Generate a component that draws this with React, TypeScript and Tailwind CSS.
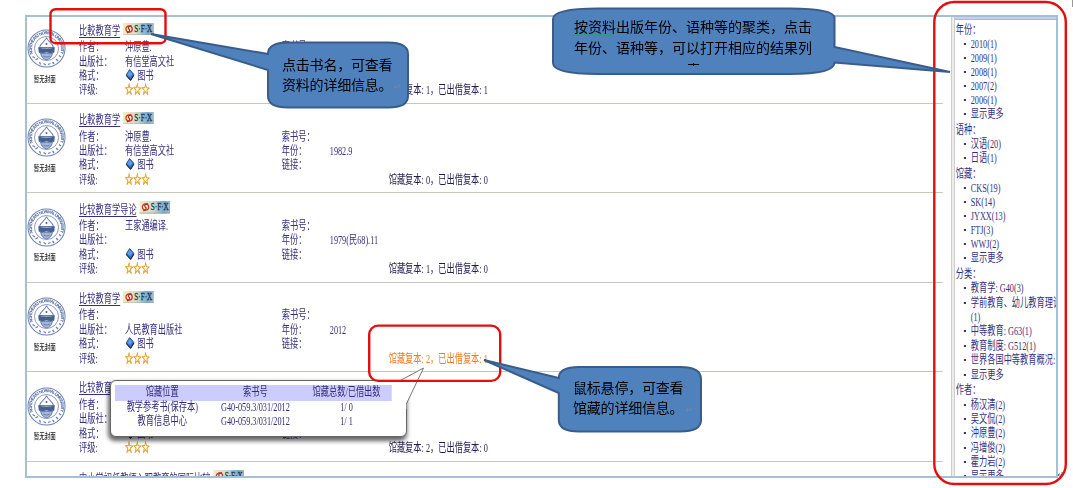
import React from "react";

type Book = {
  title: string;
  author?: string;
  publisher?: string;
  year?: string;
  copies: string;
  highlighted?: boolean;
};

const books: Book[] = [
  { title: "比較教育学", author: "沖原豊.", publisher: "有信堂高文社", copies: "馆藏复本: 1，已出借复本: 1" },
  { title: "比較教育学", author: "沖原豊.", publisher: "有信堂高文社", year: "1982.9", copies: "馆藏复本: 0，已出借复本: 0" },
  { title: "比较教育学导论", author: "王家通编译.", year: "1979(民68).11", copies: "馆藏复本: 1，已出借复本: 0" },
  { title: "比较教育学", publisher: "人民教育出版社", year: "2012", copies: "馆藏复本: 2，已出借复本: 1", highlighted: true },
  { title: "比较教育学", copies: "馆藏复本: 2，已出借复本: 0" },
];

const facets = [
  { name: "年份：", box: "h-[100.2px]", row: "h-[14px] leading-[14px]", items: ["2010(1)", "2009(1)", "2008(1)", "2007(2)", "2006(1)", "显示更多"] },
  { name: "语种：", box: "h-[44.1px]", row: "h-[14.4px] leading-[14px]", items: ["汉语(20)", "日语(1)"] },
  { name: "馆藏：", box: "h-[100.5px]", row: "h-[14px] leading-[14px]", items: ["CKS(19)", "SK(14)", "JYXX(13)", "FTJ(3)", "WWJ(2)", "显示更多"] },
  { name: "分类：", box: "h-[116.2px]", row: "h-[14.35px] leading-[14px]", items: ["教育学: G40(3)", "学前教育、幼儿教育理论", "(1)", "中等教育: G63(1)", "教育制度: G512(1)", "世界各国中等教育概况:", "显示更多"] },
  { name: "作者：", box: "h-[100px]", row: "h-[14.3px] leading-[14px]", items: ["杨汉清(2)", "吴文侃(2)", "沖原豊(2)", "冯增俊(2)", "霍力岩(2)", "显示更多"] },
];

function Logo({ id }: { id: string }) {
  return (
    <svg className="h-[39px] w-[57px]" viewBox="0 0 78 78" preserveAspectRatio="none" fill="none" stroke="#6b81b2">
      <circle cx="39" cy="39" r="37" strokeWidth="2" />
      <circle cx="39" cy="39" r="24" strokeWidth="1.6" />
      <path id={id} d="M12 50 A29 29 0 1 1 66 50" stroke="none" />
      <text fontSize="8.6" fontWeight="bold" fill="#4b639c" stroke="none" fontFamily="Liberation Sans">
        <textPath href={`#${id}`} textLength="112">NORTHEAST NORMAL UNIVERSITY</textPath>
      </text>
      <path d="M11 55l5 3M17 62l5-3M25 66l2 5M33 69l5 3M42 71l5-2M51 66l3 4M58 60l4 4M64 53l4 3" strokeWidth="2.6" />
      <path d="M39 17C37 25 27 28 25 37H53C51 28 41 25 39 17Z" fill="#fff" strokeWidth="2" />
      <circle cx="39" cy="30" r="2" fill="#4b639c" stroke="none" />
      <path d="M23 37Q39 42 55 37L54 47Q46 50 39 46Q32 50 24 47Z" fill="#45608f" stroke="#45608f" />
      <path d="M27 48Q29 59 39 62Q49 59 51 48Q45 51 39 48Q33 51 27 48Z" fill="#a9b8d6" strokeWidth="2" />
      <path d="M33 54Q39 58 45 54" strokeWidth="2" />
    </svg>
  );
}

function Sfx() {
  return (
    <svg className="h-[12.5px] w-[45px] shrink-0" viewBox="0 0 62 25" preserveAspectRatio="none">
      <defs>
        <linearGradient id="sfx" x1="0" x2="1">
          <stop offset="0" stopColor="#f1ecc9" />
          <stop offset="0.45" stopColor="#cfdcc8" />
          <stop offset="0.8" stopColor="#76a9cf" />
          <stop offset="1" stopColor="#a5c5d3" />
        </linearGradient>
      </defs>
      <rect width="62" height="25" fill="url(#sfx)" />
      <path d="M0 24.2H61.2V0" fill="none" stroke="#9a9f88" strokeWidth="1.6" />
      <circle cx="12.5" cy="12" r="6.3" fill="#fff0dc" stroke="#c43a22" strokeWidth="2.6" />
      <path d="M17 5Q8 8 12 12Q17 16 8 20" fill="none" stroke="#b52718" strokeWidth="2.4" />
      <text x="23" y="18.5" fontSize="19" textLength="36" lengthAdjust="spacingAndGlyphs" fill="#1c2f4c" stroke="#1c2f4c" strokeWidth="0.5" fontFamily="Liberation Serif">
        S·F·X
      </text>
    </svg>
  );
}

function Gem() {
  return (
    <svg className="ml-px mr-[4px] h-[12px] w-[13px] -translate-y-[1px]" viewBox="0 0 18 24" preserveAspectRatio="none">
      <path d="M8 1L17 11L10 22L1 12Z" fill="#2f6fd0" stroke="#1b2b55" strokeWidth="1.4" />
      <path d="M8 3L14 10L9 16L3 11Z" fill="#5f9dec" />
      <path d="M1 13L10 23L17 12" fill="none" stroke="#111a33" strokeWidth="2" />
    </svg>
  );
}

function TitleLine({ title }: { title: string }) {
  return (
    <div className="flex h-[16px] items-center">
      <span className="underline decoration-1 underline-offset-2">{title}</span>
      <span className="ml-[4px] flex -translate-y-[2px]">
        <Sfx />
      </span>
    </div>
  );
}

function BookRow({ book, index }: { book: Book; index: number }) {
  const first = index === 0;
  return (
    <article className={`flex items-end border-b border-[#c9c6c0] ${first ? "h-[87px]" : "h-[89.4px]"}`}>
      <div className="flex h-[74px] w-[76px] shrink-0 flex-col">
        <Logo id={`seal${index}`} />
        <span className="mt-[5.5px] pl-[10px] text-[8px] font-medium leading-[12px] text-[#222]">暂无封面</span>
      </div>
      <div className="flex h-[80.2px] grow flex-col">
        <TitleLine title={book.title} />
        <div className="mt-[1.2px] grid grid-cols-[67px_229px_70px_1fr] auto-rows-[14.4px] items-center leading-[14px]">
          <span>作者：</span>
          <span>{book.author}</span>
          <span>索书号：</span>
          <span />
          <span>出版社：</span>
          <span>{book.publisher}</span>
          <span>年份：</span>
          <span>{book.year}</span>
          <span>格式：</span>
          <span className="flex items-center">
            <Gem />
            图书
          </span>
          <span>链接：</span>
          <span />
          <span>评级:</span>
          <span className="text-[#e3a62c] [-webkit-text-stroke:0.6px_#e3a62c]">☆☆☆</span>
          <span className={`col-span-2 pl-[156px] ${book.highlighted ? "text-[#f47a1f]" : "text-[#231c52]"}`}>{book.copies}</span>
        </div>
      </div>
    </article>
  );
}

function HoldingsPopup() {
  return (
    <div className="absolute left-[110px] top-[380px] h-[57px] w-[297px] rounded-[6px] border border-[#666] bg-white px-[4px] pt-[4px] text-[#302c78] shadow-[-1px_3px_4px_1px_rgba(0,0,0,0.6)]">
      <div className="w-[404px] origin-top-left scale-x-[0.685] text-[12px]">
        <div className="grid h-[16px] grid-cols-[138px_134px_132px] bg-[#ccccff] text-center leading-[15px]">
          <span>馆藏位置</span>
          <span>索书号</span>
          <span>馆藏总数/已借出数</span>
        </div>
        <div className="grid grid-cols-[138px_134px_132px] auto-rows-[14px] text-center leading-[13px]">
          <span>教学参考书(保存本)</span>
          <span>G40-059.3/031/2012</span>
          <span>1/ 0</span>
          <span>教育信息中心</span>
          <span>G40-059.3/031/2012</span>
          <span>1/ 1</span>
        </div>
      </div>
    </div>
  );
}

function Annotations() {
  return (
    <svg className="absolute left-0 top-0 h-[488px] w-[1073px]" viewBox="0 0 1073 488" fill="none">
      <path d="M400 380.7L423.5 368L406.3 404V409L398 409V380.7Z" fill="#fff" />
      <path d="M400 380.7L423.5 368L406.3 404" stroke="#777" />
      <g stroke="#e60d0d" strokeWidth="2.4">
        <rect x="50.5" y="9.2" width="115" height="34" rx="5" />
        <rect x="369.2" y="325.6" width="131" height="55.3" rx="9" />
        <rect x="934.3" y="2" width="131.5" height="482" rx="20" />
      </g>
      <g fill="#4f81bd" stroke="#385d8a" strokeWidth="2">
        <path d="M288 42.5H388Q408 42.5 408 54V96Q408 107.5 388 107.5H288Q268 107.5 268 96V70L151 34L268 54Q268 42.5 288 42.5Z" />
        <path d="M598 8.5H790Q834.5 8.5 834.5 18V47L950 72L834.5 62.5Q834.5 74 790 74H598Q553 74 553 63V19Q553 8.5 598 8.5Z" />
        <path d="M579 367H680Q701 367 701 379V420Q701 431.5 680 431.5H579Q558.8 431.5 558.8 420V393L484 360L558.8 378Q558.8 367 579 367Z" />
      </g>
      <path d="M574 36l2-2 2 2 2-2 2 2 2-2 2 2 2-2 2 2 2-2 2 2 2-2 2 2 2-2 2 2 2-2 2 2 2-2 2 2 2-2 2 2" stroke="#1fa463" />
      <path d="M399 84v3h-5m2-1.5l-2 1.5 2 1.5M691 407v3h-5m2-1.5l-2 1.5 2 1.5" stroke="#7f8792" strokeWidth="0.9" />
      <path d="M1062 472v3h-4m1.5-1.5l-1.5 1.5 1.5 1.5" stroke="#555" strokeWidth="0.8" />
      <path d="M1072.5 0V7" stroke="#999" />
    </svg>
  );
}

export default function App() {
  return (
    <div className="relative h-[488px] w-[1073px] overflow-hidden bg-white pl-[25px] pt-[15px] text-[12px] text-[#34307f] [font-family:'Liberation_Serif','Noto_Sans_CJK_SC',serif]">
      <div className="flex h-[463px] w-[1033px] overflow-hidden border-2 border-[#a4bfd6]">
        <main className="h-full w-[924px] shrink-0 overflow-hidden">
          <div className="w-[1337px] origin-top-left scale-x-[0.685]">
            {books.map((book, i) => (
              <BookRow key={i} book={book} index={i} />
            ))}
            <div className="pl-[76px] pt-[9px]">
              <TitleLine title="中小学初任教师入职教育的国际比较" />
            </div>
          </div>
        </main>
        <div className="w-[4px] shrink-0 border-x border-[#cdcdcd] bg-[#ececec]" />
        <aside className="h-full w-[101px] overflow-hidden">
          <div className="h-[3px] border-b border-[#a9b3dc] bg-[#c6d0f0]" />
          <div className="w-[150px] origin-top-left scale-x-[0.685] pl-px pt-[2.5px]">
            {facets.map((f) => (
              <section key={f.name} className={f.box}>
                <h3 className="h-[14px] whitespace-nowrap leading-[14px]">{f.name}</h3>
                <ul className="pl-[12px]">
                  {f.items.map((t) => (
                    <li key={t} className={`flex items-center whitespace-nowrap ${f.row}`}>
                      <span className={`mr-[7px] h-[2px] w-[3px] shrink-0 ${t === "(1)" ? "" : "bg-[#34307f]"}`} />
                      {t}
                    </li>
                  ))}
                </ul>
              </section>
            ))}
          </div>
        </aside>
      </div>

      <HoldingsPopup />
      <Annotations />
      <p className="absolute left-[282px] top-[56px] whitespace-nowrap text-[14px] leading-[20px] tracking-[-0.2px] text-black">
        点击书名，可查看
        <br />
        资料的详细信息。
      </p>
      <p className="absolute left-[574px] top-[18px] h-[48px] w-[239px] overflow-hidden whitespace-nowrap text-[14px] leading-[20.5px] text-black">
        按资料出版年份、语种等的聚类，点击
        <br />
        年份、语种等，可以打开相应的结果列
        <span className="block pt-[2px] text-center">表</span>
      </p>
      <p className="absolute left-[573px] top-[379px] whitespace-nowrap text-[14px] leading-[20px] tracking-[-0.2px] text-black">
        鼠标悬停，可查看
        <br />
        馆藏的详细信息。
      </p>
    </div>
  );
}
